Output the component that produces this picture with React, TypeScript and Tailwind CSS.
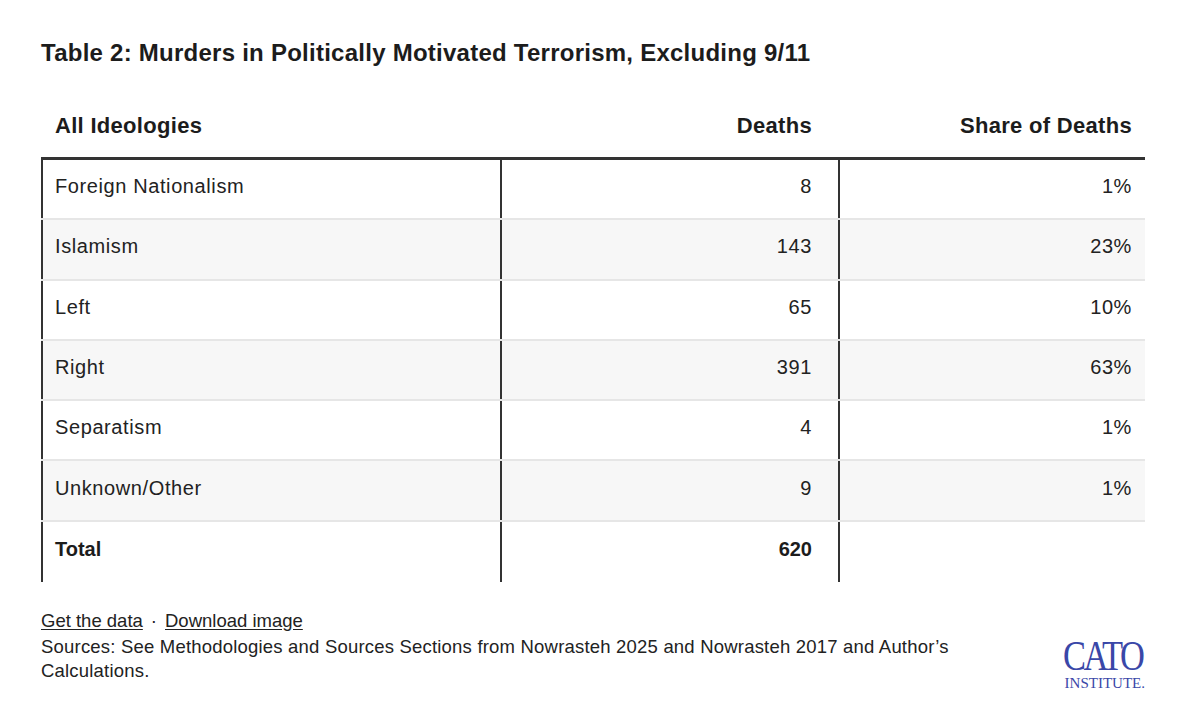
import React from 'react';

type Row = {
  name: string;
  deaths: string;
  share: string;
};

const rows: Row[] = [
  { name: 'Foreign Nationalism', deaths: '8', share: '1%' },
  { name: 'Islamism', deaths: '143', share: '23%' },
  { name: 'Left', deaths: '65', share: '10%' },
  { name: 'Right', deaths: '391', share: '63%' },
  { name: 'Separatism', deaths: '4', share: '1%' },
  { name: 'Unknown/Other', deaths: '9', share: '1%' },
];

function CatoLogo() {
  return (
    <div className="flex flex-col items-end text-[#3a47a8] font-['Liberation_Serif',serif] leading-none">
      <span className="inline-block text-[42px] leading-[30px] tracking-[-3px] scale-x-[0.82] origin-right pr-[3px]">CATO</span>
      <span className="text-[15px] leading-[12px] mt-[6px]">INSTITUTE.</span>
    </div>
  );
}

export default function App() {
  return (
    <div className="w-[1200px] h-[705px] bg-white px-[41px] pt-[37px] font-['Liberation_Sans',sans-serif] text-[#222]">
      <h1 className="text-[24px] font-bold tracking-[0.25px] leading-[32px] text-[#1c1c1c]">
        Table 2: Murders in Politically Motivated Terrorism, Excluding 9/11
      </h1>

      <div className="mt-[21px] w-[1104px]">
        <div className="flex h-[70px] items-center pt-[4px] text-[22px] font-bold tracking-[0.3px] text-[#1c1c1c] border-b-[3px] border-[#333]">
          <div className="w-[459px] pl-[14px]">All Ideologies</div>
          <div className="w-[338px] text-right pr-[26px]">Deaths</div>
          <div className="flex-1 text-right pr-[13px]">Share of Deaths</div>
        </div>

        {rows.map((row, i) => (
          <div
            key={row.name}
            className={`flex h-[60.3px] items-center text-[20px] tracking-[0.6px] border-b-2 border-[#e6e6e6] ${i % 2 === 1 ? 'bg-[#f7f7f7]' : 'bg-white'}`}
          >
            <div className="w-[459px] h-full flex items-center pb-[6px] pl-[12px] border-l-2 border-[#333]">{row.name}</div>
            <div className="w-[338px] h-full flex items-center justify-end pb-[6px] pr-[26px] border-l-2 border-[#333]">{row.deaths}</div>
            <div className="flex-1 h-full flex items-center justify-end pb-[6px] pr-[13px] border-l-2 border-[#333]">{row.share}</div>
          </div>
        ))}

        <div className="flex h-[60px] items-center text-[20px] font-bold text-[#1c1c1c]">
          <div className="w-[459px] h-full flex items-center pb-[6px] pl-[12px] border-l-2 border-[#333]">Total</div>
          <div className="w-[338px] h-full flex items-center justify-end pb-[6px] pr-[26px] border-l-2 border-[#333]">620</div>
          <div className="flex-1 h-full border-l-2 border-[#333]"></div>
        </div>
      </div>

      <div className="mt-[27px] flex items-end justify-between w-[1104px]">
        <div className="text-[18.5px] leading-[23.5px] text-[#222]">
          <div>
            <a className="underline underline-offset-2">Get the data</a>
            <span className="mx-[8px]">·</span>
            <a className="underline underline-offset-2">Download image</a>
          </div>
          <p className="w-[925px] mt-[3px] tracking-[0.2px]">
            Sources: See Methodologies and Sources Sections from Nowrasteh 2025 and Nowrasteh 2017 and Author’s Calculations.
          </p>
        </div>
        <div className="mb-[-7px]">
          <CatoLogo />
        </div>
      </div>
    </div>
  );
}
